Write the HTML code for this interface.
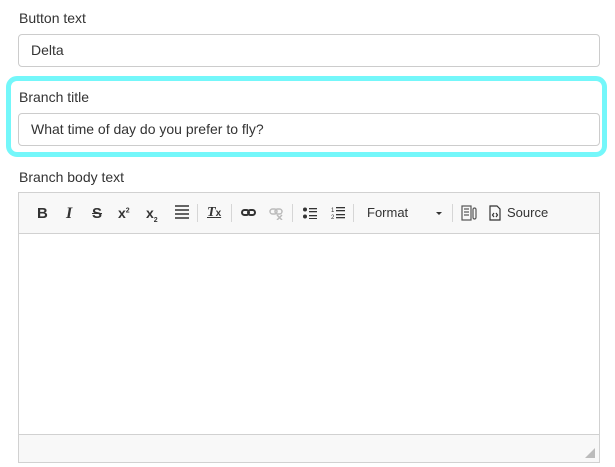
<!DOCTYPE html>
<html><head><meta charset="utf-8"><style>
*{box-sizing:border-box;margin:0;padding:0}
body{width:615px;height:467px;background:#fff;font-family:"Liberation Sans",Arial,sans-serif;color:#333;position:relative;overflow:hidden}
.lbl{position:absolute;left:19px;font-size:14px;color:#333}
.inp{position:absolute;left:18px;width:582px;border:1px solid #ccc;border-radius:4px;background:#fff;font-size:14px;padding-left:12px;color:#333}
.hl{position:absolute;left:6px;top:76px;width:601px;height:81px;border:5px solid #74f7fa;border-radius:11px}
.ed{position:absolute;left:18px;top:192px;width:582px;height:271px;border:1px solid #d1d1d1}
.tb{position:absolute;left:0;top:0;right:0;height:41px;background:#f8f8f8;border-bottom:1px solid #d1d1d1}
.bt{position:absolute;left:0;right:0;bottom:0;height:28px;background:#f8f8f8;border-top:1px solid #d1d1d1}
.t{position:absolute;top:12px;font-size:14px;color:#333}
.sep{position:absolute;top:11px;width:1px;height:18px;background:#d6d6d6}
</style></head><body>
<div class="lbl" style="top:10px">Button text</div>
<div class="inp" style="top:34px;height:33px;line-height:31px">Delta</div>
<div class="hl"></div>
<div class="lbl" style="top:89px">Branch title</div>
<div class="inp" style="top:113px;height:33px;line-height:31px">What time of day do you prefer to fly?</div>
<div class="lbl" style="top:169px">Branch body text</div>
<div class="ed">
<div class="tb">
<div class="t" style="left:18px;font-weight:bold;font-size:15px">B</div>
<div class="t" style="left:47px;font-style:italic;font-weight:bold;font-family:'Liberation Serif',serif;font-size:16px">I</div>
<div class="t" style="left:73px;font-weight:bold;text-decoration:line-through;font-size:15px">S</div>
<div class="t" style="left:99px;font-weight:bold">x<sup style="font-size:7px">2</sup></div>
<div class="t" style="left:127px;font-weight:bold">x<sub style="font-size:7px">2</sub></div>
<svg style="position:absolute;left:156px;top:12px" width="14" height="16"><g stroke="#333" stroke-width="1.5"><line x1="0" y1="1" x2="14" y2="1"/><line x1="0" y1="5" x2="14" y2="5"/><line x1="0" y1="9" x2="14" y2="9"/><line x1="0" y1="13" x2="14" y2="13"/></g></svg>
<div class="sep" style="left:178px"></div>
<div class="t" style="left:188px;font-style:italic;font-weight:bold;text-decoration:underline;font-family:'Liberation Serif',serif">T<span style="font-size:10px;font-style:normal;font-family:'Liberation Sans'">x</span></div>
<div class="sep" style="left:212px"></div>
<svg style="position:absolute;left:222px;top:15px" width="15" height="10"><g fill="none" stroke="#333" stroke-width="2"><rect x="1" y="2" width="7" height="5" rx="2.5"/><rect x="7" y="2" width="7" height="5" rx="2.5"/></g></svg>
<svg style="position:absolute;left:250px;top:15px" width="15" height="12"><g fill="none" stroke="#bbb" stroke-width="1.5"><rect x="1" y="1" width="7" height="5" rx="2.5"/><rect x="6" y="1" width="7" height="5" rx="2.5"/><path d="M8 7l5 5M13 7l-5 5"/></g></svg>
<div class="sep" style="left:273px"></div>
<svg style="position:absolute;left:284px;top:14px" width="14" height="12"><g fill="#333"><circle cx="2" cy="2.5" r="2"/><circle cx="2" cy="9.5" r="2"/><rect x="6" y="1" width="8" height="1.3"/><rect x="6" y="4" width="8" height="1.3"/><rect x="6" y="8" width="8" height="1.3"/><rect x="6" y="11" width="8" height="1"/></g></svg>
<svg style="position:absolute;left:312px;top:13px" width="14" height="14"><g fill="#333"><text x="0" y="6" font-size="6" font-family="Liberation Sans">1</text><text x="0" y="13" font-size="6" font-family="Liberation Sans">2</text><rect x="5" y="1" width="9" height="1.3"/><rect x="5" y="4" width="9" height="1.3"/><rect x="5" y="8" width="9" height="1.3"/><rect x="5" y="11" width="9" height="1.3"/></g></svg>
<div class="sep" style="left:334px"></div>
<div class="t" style="left:348px;font-size:13px">Format</div>
<div style="position:absolute;left:417px;top:19px;border-left:3px solid transparent;border-right:3px solid transparent;border-top:3px solid #333"></div>
<div class="sep" style="left:433px"></div>
<svg style="position:absolute;left:442px;top:12px" width="16" height="17"><g fill="none" stroke="#555" stroke-width="1.2"><rect x="1" y="1" width="9" height="14"/><line x1="3" y1="4" x2="8" y2="4"/><line x1="3" y1="7" x2="8" y2="7"/><line x1="3" y1="10" x2="8" y2="10"/><rect x="12" y="3" width="3" height="11" rx="1.5"/></g></svg>
<svg style="position:absolute;left:470px;top:12px" width="12" height="16"><g fill="none" stroke="#333" stroke-width="1.2"><path d="M1 1h7l3 3v11H1z"/><path d="M5 8l-1.5 2L5 12M7 8l1.5 2L7 12"/></g></svg>
<div class="t" style="left:488px;font-size:13px">Source</div>
</div>
<div class="bt"><svg style="position:absolute;right:4px;bottom:4px" width="10" height="10"><path d="M10 0V10H0z" fill="#bbb"/></svg></div>
</div>
</body></html>
